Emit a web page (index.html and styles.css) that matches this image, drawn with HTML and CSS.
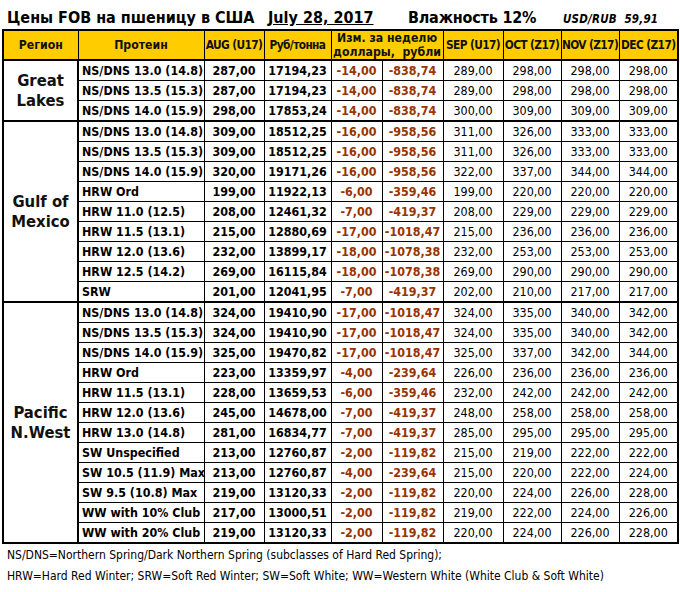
FILE: index.html
```html
<!DOCTYPE html>
<html lang="ru">
<head>
<meta charset="utf-8">
<title>Цены FOB на пшеницу в США</title>
<link rel="stylesheet" href="styles.css">
</head>
<body>
<div class="page">
  <div class="title">
    <span class="t-main">Цены FOB на пшеницу в США</span>
    <span class="t-date">July 28, 2017</span>
    <span class="t-hum">Влажность 12%</span>
    <span class="t-rate">USD/RUB&nbsp; 59,91</span>
  </div>
  <table class="prices">
    <colgroup>
      <col class="c-reg"><col class="c-prot"><col class="c-aug"><col class="c-rub"><col class="c-chd"><col class="c-chr"><col class="c-fut"><col class="c-fut2"><col class="c-fut2"><col class="c-fut3">
    </colgroup>
    <thead>
      <tr>
        <th>Регион</th><th>Протеин</th><th class="tight">AUG (U17)</th><th class="tight">Руб/тонна</th><th colspan="2" class="chg-h">Изм. за неделю<br>доллары,&nbsp; рубли</th><th class="tight">SEP (U17)</th><th class="tight">OCT (Z17)</th><th class="tight">NOV (Z17)</th><th class="tight">DEC (Z17)</th>
      </tr>
    </thead>
    <tbody>
      <tr class="grp"><td class="reg" rowspan="3">Great<br>Lakes</td><td class="prot">NS/DNS 13.0 (14.8)</td><td class="b">287,00</td><td class="b">17194,23</td><td class="chg">-14,00</td><td class="chg">-838,74</td><td>289,00</td><td>298,00</td><td>298,00</td><td>298,00</td></tr>
      <tr><td class="prot">NS/DNS 13.5 (15.3)</td><td class="b">287,00</td><td class="b">17194,23</td><td class="chg">-14,00</td><td class="chg">-838,74</td><td>289,00</td><td>298,00</td><td>298,00</td><td>298,00</td></tr>
      <tr><td class="prot">NS/DNS 14.0 (15.9)</td><td class="b">298,00</td><td class="b">17853,24</td><td class="chg">-14,00</td><td class="chg">-838,74</td><td>300,00</td><td>309,00</td><td>309,00</td><td>309,00</td></tr>

      <tr class="grp"><td class="reg" rowspan="9">Gulf of<br>Mexico</td><td class="prot">NS/DNS 13.0 (14.8)</td><td class="b">309,00</td><td class="b">18512,25</td><td class="chg">-16,00</td><td class="chg">-958,56</td><td>311,00</td><td>326,00</td><td>333,00</td><td>333,00</td></tr>
      <tr><td class="prot">NS/DNS 13.5 (15.3)</td><td class="b">309,00</td><td class="b">18512,25</td><td class="chg">-16,00</td><td class="chg">-958,56</td><td>311,00</td><td>326,00</td><td>333,00</td><td>333,00</td></tr>
      <tr><td class="prot">NS/DNS 14.0 (15.9)</td><td class="b">320,00</td><td class="b">19171,26</td><td class="chg">-16,00</td><td class="chg">-958,56</td><td>322,00</td><td>337,00</td><td>344,00</td><td>344,00</td></tr>
      <tr><td class="prot">HRW Ord</td><td class="b">199,00</td><td class="b">11922,13</td><td class="chg">-6,00</td><td class="chg">-359,46</td><td>199,00</td><td>220,00</td><td>220,00</td><td>220,00</td></tr>
      <tr><td class="prot">HRW 11.0 (12.5)</td><td class="b">208,00</td><td class="b">12461,32</td><td class="chg">-7,00</td><td class="chg">-419,37</td><td>208,00</td><td>229,00</td><td>229,00</td><td>229,00</td></tr>
      <tr><td class="prot">HRW 11.5 (13.1)</td><td class="b">215,00</td><td class="b">12880,69</td><td class="chg">-17,00</td><td class="chg">-1018,47</td><td>215,00</td><td>236,00</td><td>236,00</td><td>236,00</td></tr>
      <tr><td class="prot">HRW 12.0 (13.6)</td><td class="b">232,00</td><td class="b">13899,17</td><td class="chg">-18,00</td><td class="chg">-1078,38</td><td>232,00</td><td>253,00</td><td>253,00</td><td>253,00</td></tr>
      <tr><td class="prot">HRW 12.5 (14.2)</td><td class="b">269,00</td><td class="b">16115,84</td><td class="chg">-18,00</td><td class="chg">-1078,38</td><td>269,00</td><td>290,00</td><td>290,00</td><td>290,00</td></tr>
      <tr><td class="prot">SRW</td><td class="b">201,00</td><td class="b">12041,95</td><td class="chg">-7,00</td><td class="chg">-419,37</td><td>202,00</td><td>210,00</td><td>217,00</td><td>217,00</td></tr>

      <tr class="grp"><td class="reg" rowspan="12">Pacific<br>N.West</td><td class="prot">NS/DNS 13.0 (14.8)</td><td class="b">324,00</td><td class="b">19410,90</td><td class="chg">-17,00</td><td class="chg">-1018,47</td><td>324,00</td><td>335,00</td><td>340,00</td><td>342,00</td></tr>
      <tr><td class="prot">NS/DNS 13.5 (15.3)</td><td class="b">324,00</td><td class="b">19410,90</td><td class="chg">-17,00</td><td class="chg">-1018,47</td><td>324,00</td><td>335,00</td><td>340,00</td><td>342,00</td></tr>
      <tr><td class="prot">NS/DNS 14.0 (15.9)</td><td class="b">325,00</td><td class="b">19470,82</td><td class="chg">-17,00</td><td class="chg">-1018,47</td><td>325,00</td><td>337,00</td><td>342,00</td><td>344,00</td></tr>
      <tr><td class="prot">HRW Ord</td><td class="b">223,00</td><td class="b">13359,97</td><td class="chg">-4,00</td><td class="chg">-239,64</td><td>226,00</td><td>236,00</td><td>236,00</td><td>236,00</td></tr>
      <tr><td class="prot">HRW 11.5 (13.1)</td><td class="b">228,00</td><td class="b">13659,53</td><td class="chg">-6,00</td><td class="chg">-359,46</td><td>232,00</td><td>242,00</td><td>242,00</td><td>242,00</td></tr>
      <tr><td class="prot">HRW 12.0 (13.6)</td><td class="b">245,00</td><td class="b">14678,00</td><td class="chg">-7,00</td><td class="chg">-419,37</td><td>248,00</td><td>258,00</td><td>258,00</td><td>258,00</td></tr>
      <tr><td class="prot">HRW 13.0 (14.8)</td><td class="b">281,00</td><td class="b">16834,77</td><td class="chg">-7,00</td><td class="chg">-419,37</td><td>285,00</td><td>295,00</td><td>295,00</td><td>295,00</td></tr>
      <tr><td class="prot">SW Unspecified</td><td class="b">213,00</td><td class="b">12760,87</td><td class="chg">-2,00</td><td class="chg">-119,82</td><td>215,00</td><td>219,00</td><td>222,00</td><td>222,00</td></tr>
      <tr><td class="prot">SW 10.5 (11.9) Max</td><td class="b">213,00</td><td class="b">12760,87</td><td class="chg">-4,00</td><td class="chg">-239,64</td><td>215,00</td><td>220,00</td><td>222,00</td><td>224,00</td></tr>
      <tr><td class="prot">SW 9.5 (10.8) Max</td><td class="b">219,00</td><td class="b">13120,33</td><td class="chg">-2,00</td><td class="chg">-119,82</td><td>220,00</td><td>224,00</td><td>226,00</td><td>228,00</td></tr>
      <tr><td class="prot">WW with 10% Club</td><td class="b">217,00</td><td class="b">13000,51</td><td class="chg">-2,00</td><td class="chg">-119,82</td><td>219,00</td><td>222,00</td><td>224,00</td><td>226,00</td></tr>
      <tr><td class="prot">WW with 20% Club</td><td class="b">219,00</td><td class="b">13120,33</td><td class="chg">-2,00</td><td class="chg">-119,82</td><td>220,00</td><td>224,00</td><td>226,00</td><td>228,00</td></tr>
    </tbody>
  </table>
  <div class="notes">
    <p>NS/DNS=Northern Spring/Dark Northern Spring (subclasses of Hard Red Spring);</p>
    <p>HRW=Hard Red Winter; SRW=Soft Red Winter; SW=Soft White; WW=Western White (White Club &amp; Soft White)</p>
  </div>
</div>
</body>
</html>
```

FILE: styles.css
```css
html, body {
  margin: 0;
  padding: 0;
  background: #fff;
}
body {
  font-family: "DejaVu Sans Condensed", "DejaVu Sans", sans-serif;
  font-stretch: condensed;
  color: #000;
}
.page {
  width: 680px;
  padding: 0 0 0 2px;
}
.title {
  display: grid;
  grid-template-columns: 261px 140px 155px auto;
  align-items: baseline;
  height: 29px;
  padding-left: 5px;
  box-sizing: border-box;
  padding-top: 8px;
  font-weight: bold;
  font-size: 16px;
  white-space: nowrap;
}
.t-date {
  text-decoration: underline;
}
.t-hum {
  letter-spacing: -0.2px;
}
.t-rate {
  font-size: 11.5px;
  font-style: italic;
  letter-spacing: 0.2px;
}
.prices {
  border-collapse: collapse;
  table-layout: fixed;
  width: 675px;
  border: 2px solid #000;
  font-size: 12.4px;
}
.c-reg { width: 75px; }
.c-prot { width: 126px; }
.c-aug { width: 60px; }
.c-rub { width: 67px; }
.c-chd { width: 51px; }
.c-chr { width: 61px; }
.c-fut { width: 60px; }
.c-fut2 { width: 58px; }
.c-fut3 { width: 59px; }
.prices th {
  background: #ffcc00;
  color: #111;
  font-weight: bold;
  font-size: 12.2px;
  border: 1px solid #000;
  border-bottom: 2px solid #000;
  height: 27px;
  padding: 0;
  white-space: nowrap;
  overflow: visible;
  line-height: 14px;
}
.prices th.tight {
  font-size: 11.8px;
  letter-spacing: -0.6px;
}
.prices td {
  border: 1px solid #000;
  height: 19px;
  padding: 0;
  text-align: center;
  white-space: nowrap;
  line-height: 16px;
}
.prices tr.grp td {
  border-top: 2px solid #000;
}
.prices td.reg {
  border-right: 2px solid #000;
  font-size: 16.5px;
  font-weight: bold;
  line-height: 20px;
  color: #111;
}
.prices td.prot {
  text-align: left;
  padding-left: 3px;
  font-weight: bold;
}
.prices td.b {
  font-weight: bold;
}
.prices td.chg {
  font-weight: bold;
  color: #993300;
}
.notes {
  padding-left: 5px;
  padding-top: 1px;
  font-size: 12px;
}
.notes p {
  margin: 0;
  line-height: 21px;
}
```
